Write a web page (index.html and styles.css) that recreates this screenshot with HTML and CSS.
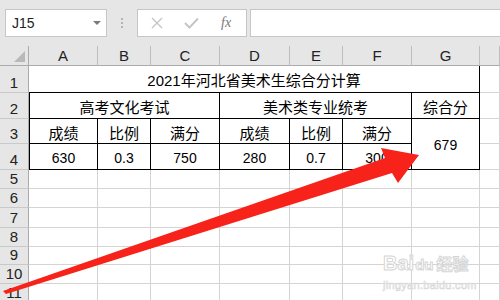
FILE: index.html
```html
<!DOCTYPE html>
<html lang="zh-CN">
<head>
  <meta charset="UTF-8">
  <meta name="viewport" content="width=device-width, initial-scale=1.0">
  <title>2021年河北省美术生综合分计算</title>
  <link rel="stylesheet" href="styles.css">
</head>
<body>
  <div class="toolbar">
    <div class="name-box">J15<span class="caret"></span></div>
    <div class="grip"><i></i><i></i><i></i></div>
    <div class="fx-buttons">
      <svg class="btn-icon" width="12" height="12" viewBox="0 0 12 12">
        <path d="M1 1 L11 11 M11 1 L1 11" stroke="#c6c6c6" stroke-width="1.4" fill="none"/>
      </svg>
      <svg class="btn-icon" width="15" height="12" viewBox="0 0 15 12">
        <path d="M1 6 L5.5 10.5 L14 1.5" stroke="#c6c6c6" stroke-width="2" fill="none"/>
      </svg>
      <span class="fx">fx</span>
    </div>
    <div class="formula-input"></div>
  </div>

  <div class="sheet">
    <div class="corner"><span class="corner-mark"></span></div>
    <div class="col-head">A</div>
    <div class="col-head">B</div>
    <div class="col-head">C</div>
    <div class="col-head">D</div>
    <div class="col-head">E</div>
    <div class="col-head">F</div>
    <div class="col-head">G</div>
    <div class="col-head"></div>

    <div class="row-head">1</div>
    <div class="cell title b-line span-7">2021年河北省美术生综合分计算</div>
    <div class="cell"></div>

    <div class="row-head">2</div>
    <div class="cell b-line b-left span-3">高考文化考试</div>
    <div class="cell b-line span-3">美术类专业统考</div>
    <div class="cell b-line">综合分</div>
    <div class="cell"></div>

    <div class="row-head">3</div>
    <div class="cell b-line b-left">成绩</div>
    <div class="cell b-line">比例</div>
    <div class="cell b-line">满分</div>
    <div class="cell b-line">成绩</div>
    <div class="cell b-line">比例</div>
    <div class="cell b-line">满分</div>
    <div class="cell b-line num rows-2">679</div>
    <div class="cell"></div>

    <div class="row-head">4</div>
    <div class="cell b-line b-left num">630</div>
    <div class="cell b-line num">0.3</div>
    <div class="cell b-line num">750</div>
    <div class="cell b-line num">280</div>
    <div class="cell b-line num">0.7</div>
    <div class="cell b-line num">300</div>
    <div class="cell"></div>

    <div class="row-head">5</div>
    <div class="cell"></div><div class="cell"></div><div class="cell"></div><div class="cell"></div>
    <div class="cell"></div><div class="cell"></div><div class="cell"></div><div class="cell"></div>

    <div class="row-head">6</div>
    <div class="cell"></div><div class="cell"></div><div class="cell"></div><div class="cell"></div>
    <div class="cell"></div><div class="cell"></div><div class="cell"></div><div class="cell"></div>

    <div class="row-head">7</div>
    <div class="cell"></div><div class="cell"></div><div class="cell"></div><div class="cell"></div>
    <div class="cell"></div><div class="cell"></div><div class="cell"></div><div class="cell"></div>

    <div class="row-head">8</div>
    <div class="cell"></div><div class="cell"></div><div class="cell"></div><div class="cell"></div>
    <div class="cell"></div><div class="cell"></div><div class="cell"></div><div class="cell"></div>

    <div class="row-head">9</div>
    <div class="cell"></div><div class="cell"></div><div class="cell"></div><div class="cell"></div>
    <div class="cell"></div><div class="cell"></div><div class="cell"></div><div class="cell"></div>

    <div class="row-head">10</div>
    <div class="cell"></div><div class="cell"></div><div class="cell"></div><div class="cell"></div>
    <div class="cell"></div><div class="cell"></div><div class="cell"></div><div class="cell"></div>

    <div class="row-head">11</div>
    <div class="cell"></div><div class="cell"></div><div class="cell"></div><div class="cell"></div>
    <div class="cell"></div><div class="cell"></div><div class="cell"></div><div class="cell"></div>
  </div>

  <!-- pointer drawn over the sheet -->
  <svg class="arrow" width="500" height="300" viewBox="0 0 500 300">
    <polygon points="3,291 385,158 381,148 419,155 398,183 392,173 6,294" fill="#f7231a"/>
  </svg>

  <div class="watermark">
    <div class="wm-logo">Bai<span class="wm-du">du</span><span class="wm-cn">经验</span></div>
    <div class="wm-url">jingyan.baidu.com</div>
  </div>
</body>
</html>
```

FILE: styles.css
```css
html, body {
  margin: 0;
  padding: 0;
}
body {
  width: 500px;
  height: 300px;
  overflow: hidden;
  position: relative;
  background: #e6e6e6;
  font-family: "Liberation Sans", "Noto Sans CJK SC", sans-serif;
  color: #000;
}

/* formula bar */
.toolbar {
  height: 46px;
  display: flex;
  align-items: flex-start;
  padding: 9px 0 0 5px;
  box-sizing: border-box;
}
.name-box {
  box-sizing: border-box;
  width: 102px;
  height: 28px;
  background: #fff;
  border: 1px solid #c6c6c6;
  display: flex;
  align-items: center;
  justify-content: space-between;
  padding: 0 5px 0 6px;
  font-size: 14px;
  color: #222;
}
.caret {
  width: 0;
  height: 0;
  border-left: 4px solid transparent;
  border-right: 4px solid transparent;
  border-top: 4px solid #7b7b7b;
}
.grip {
  width: 30px;
  height: 28px;
  display: flex;
  flex-direction: column;
  align-items: center;
  justify-content: center;
  gap: 2px;
}
.grip i {
  width: 2px;
  height: 2px;
  background: #b4b4b4;
}
.fx-buttons {
  box-sizing: border-box;
  width: 110px;
  height: 28px;
  background: #fff;
  border: 1px solid #c6c6c6;
  display: flex;
  align-items: center;
  padding-left: 13px;
}
.btn-icon {
  margin-right: 21px;
}
.btn-icon + .btn-icon {
  margin-right: 22px;
}
.fx {
  font-family: "Liberation Serif", serif;
  font-style: italic;
  font-size: 14px;
  color: #777;
}
.formula-input {
  box-sizing: border-box;
  margin-left: 3px;
  flex: 1;
  height: 28px;
  background: #fff;
  border: 1px solid #c6c6c6;
  border-right: none;
}

/* worksheet */
.sheet {
  display: grid;
  grid-template-columns: 29px 69px 53px 69px 70px 53px 69px 68px 1fr;
  grid-template-rows: 20px 27px 26px 25px 26px 19px 19px 20px 19px 18px 19px 19px;
  background: #fff;
}
.corner, .col-head, .row-head, .cell {
  box-sizing: border-box;
}
.corner {
  background: #e6e6e6;
  border-right: 1px solid #ababab;
  border-bottom: 1px solid #ababab;
  position: relative;
}
.corner-mark {
  position: absolute;
  right: 3px;
  bottom: 3px;
  width: 0;
  height: 0;
  border-left: 11px solid transparent;
  border-bottom: 11px solid #b9b9b9;
}
.col-head {
  background: #e6e6e6;
  border-right: 1px solid #bdbdbd;
  border-bottom: 1px solid #ababab;
  display: flex;
  align-items: flex-end;
  justify-content: center;
  font-size: 15px;
  color: #222;
  padding-bottom: 1px;
}
.row-head {
  background: #e6e6e6;
  border-right: 1px solid #ababab;
  border-bottom: 1px solid #c9c9c9;
  display: flex;
  align-items: flex-end;
  justify-content: center;
  font-size: 15px;
  color: #222;
  line-height: 1;
  padding-bottom: 2px;
}
.cell {
  border-right: 1px solid #d4d4d4;
  border-bottom: 1px solid #d4d4d4;
  display: flex;
  align-items: center;
  justify-content: center;
  font-size: 15px;
  padding-top: 2px;
  white-space: nowrap;
}
.cell.title {
  padding-top: 0;
}
.cell.num {
  font-size: 14px;
}
.b-line {
  border-right-color: #000;
  border-bottom-color: #000;
}
.b-left {
  border-left: 1px solid #000;
}
.span-7 { grid-column: span 7; }
.span-3 { grid-column: span 3; }
.rows-2 { grid-row: span 2; }

/* overlays */
.arrow {
  position: absolute;
  left: 0;
  top: 0;
  pointer-events: none;
}
.watermark {
  position: absolute;
  left: 383px;
  top: 252px;
  color: #fff;
  -webkit-text-stroke: 1px #d6d6d6;
  pointer-events: none;
}
.wm-logo {
  font-size: 20px;
  font-weight: bold;
  line-height: 22px;
}
.wm-du {
  font-size: 15px;
  margin: 0 3px 0 1px;
}
.wm-cn {
  font-size: 16px;
}
.wm-url {
  font-size: 11px;
  line-height: 14px;
  margin-top: 2px;
  letter-spacing: 0.3px;
  -webkit-text-stroke: 0.6px #d6d6d6;
}
```
